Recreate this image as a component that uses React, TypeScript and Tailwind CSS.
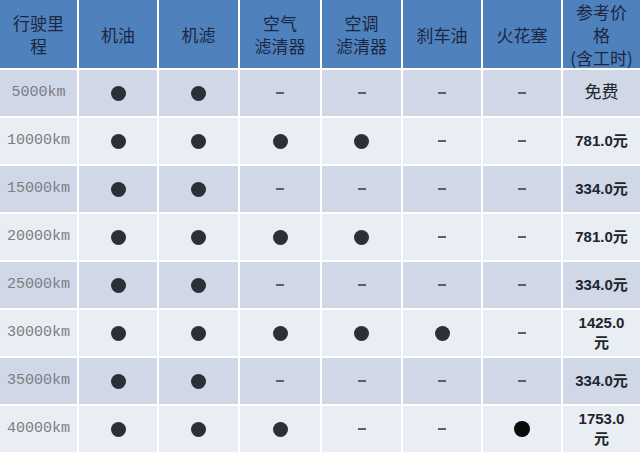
import React from 'react';

// service interval table: which parts are replaced at each mileage
type Mark = 'dot' | 'dash' | 'black';

interface Row {
  km: string;
  marks: Mark[];
  price: React.ReactNode;
}

const headers: React.ReactNode[] = [
  <>行驶里<br />程</>,
  '机油',
  '机滤',
  <>空气<br />滤清器</>,
  <>空调<br />滤清器</>,
  '刹车油',
  '火花塞',
  <>参考价<br />格<br />(含工时)</>,
];

const rows: Row[] = [
  { km: '5000km', marks: ['dot', 'dot', 'dash', 'dash', 'dash', 'dash'], price: <span className="text-[17px] font-normal">免费</span> },
  { km: '10000km', marks: ['dot', 'dot', 'dot', 'dot', 'dash', 'dash'], price: '781.0元' },
  { km: '15000km', marks: ['dot', 'dot', 'dash', 'dash', 'dash', 'dash'], price: '334.0元' },
  { km: '20000km', marks: ['dot', 'dot', 'dot', 'dot', 'dash', 'dash'], price: '781.0元' },
  { km: '25000km', marks: ['dot', 'dot', 'dash', 'dash', 'dash', 'dash'], price: '334.0元' },
  { km: '30000km', marks: ['dot', 'dot', 'dot', 'dot', 'dot', 'dash'], price: <>1425.0<br />元</> },
  { km: '35000km', marks: ['dot', 'dot', 'dash', 'dash', 'dash', 'dash'], price: '334.0元' },
  { km: '40000km', marks: ['dot', 'dot', 'dot', 'dash', 'dash', 'black'], price: <>1753.0<br />元</> },
];

function Cell({ mark }: { mark: Mark }) {
  if (mark === 'dot') return <span className="block w-[15px] h-[15px] rounded-full bg-[#2c2f38]" />;
  if (mark === 'black') return <span className="block w-[16px] h-[16px] rounded-full bg-[#0a0a0a]" />;
  return <span className="block w-[8px] h-[2px] bg-[#5a5f6a]" />;
}

export default function App() {
  return (
    <div className="w-[640px] h-[455px] overflow-hidden bg-white">
      <div className="grid grid-cols-[77px_78px_79px_80px_79px_78px_78px_77px] gap-x-[2px]">
        {headers.map((h, i) => (
          <div
            key={i}
            className="h-[68px] bg-[#4f81bd] flex items-center justify-center text-center text-[17px] leading-[23px] text-[#1b2742]"
            style={{ fontFamily: '"Noto Sans CJK SC", sans-serif' }}
          >
            <div>{h}</div>
          </div>
        ))}
      </div>

      <div className="mt-[2px] flex flex-col gap-y-[2px]">
        {rows.map((r, ri) => (
          <div
            key={r.km}
            className="grid grid-cols-[77px_78px_79px_80px_79px_78px_78px_77px] gap-x-[2px] h-[46px]"
          >
            <div
              className={`${ri % 2 === 0 ? 'bg-[#d0d8e8]' : 'bg-[#e9edf4]'} flex items-center justify-center text-[15px] text-[#7a7d84]`}
              style={{ fontFamily: '"Liberation Mono", monospace' }}
            >
              {r.km}
            </div>
            {r.marks.map((m, mi) => (
              <div
                key={mi}
                className={`${ri % 2 === 0 ? 'bg-[#d0d8e8]' : 'bg-[#e9edf4]'} flex items-center justify-center`}
              >
                <Cell mark={m} />
              </div>
            ))}
            <div
              className={`${ri % 2 === 0 ? 'bg-[#d0d8e8]' : 'bg-[#e9edf4]'} flex items-center justify-center text-center text-[15px] leading-[20px] font-bold text-[#23252b]`}
              style={{ fontFamily: '"Liberation Sans", "Noto Sans CJK SC", sans-serif' }}
            >
              <div>{r.price}</div>
            </div>
          </div>
        ))}
      </div>
    </div>
  );
}
